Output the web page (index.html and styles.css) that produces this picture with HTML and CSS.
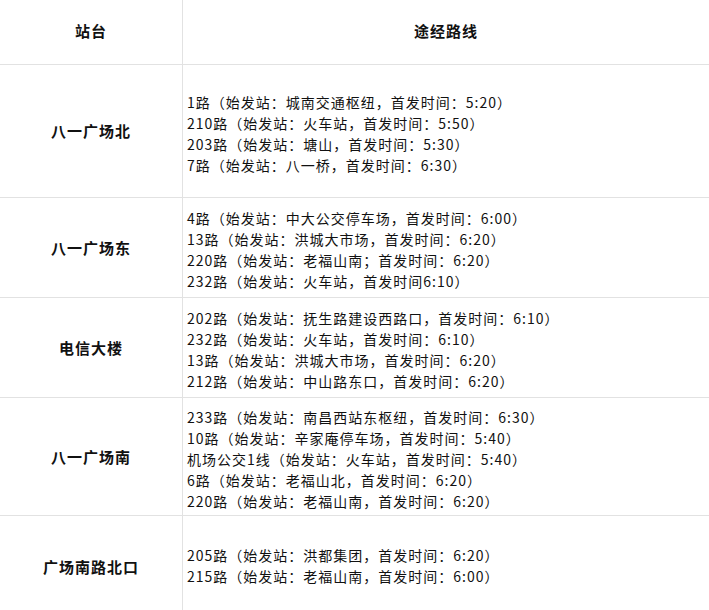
FILE: index.html
```html
<!DOCTYPE html>
<html lang="zh-CN">
<head>
<meta charset="utf-8">
<link rel="stylesheet" href="styles.css">
</head>
<body>
<table class="bus-table">
  <thead>
    <tr class="row-head">
      <th class="col-station">站台</th>
      <th class="col-routes">途经路线</th>
    </tr>
  </thead>
  <tbody>
    <tr class="row-1">
      <td class="col-station">八一广场北</td>
      <td class="col-routes">
        <div>1路（始发站：城南交通枢纽，首发时间：5:20）</div>
        <div>210路（始发站：火车站，首发时间：5:50）</div>
        <div>203路（始发站：塘山，首发时间：5:30）</div>
        <div>7路（始发站：八一桥，首发时间：6:30）</div>
      </td>
    </tr>
    <tr class="row-2">
      <td class="col-station">八一广场东</td>
      <td class="col-routes">
        <div>4路（始发站：中大公交停车场，首发时间：6:00）</div>
        <div>13路（始发站：洪城大市场，首发时间：6:20）</div>
        <div>220路（始发站：老福山南；首发时间：6:20）</div>
        <div>232路（始发站：火车站，首发时间6:10）</div>
      </td>
    </tr>
    <tr class="row-3">
      <td class="col-station">电信大楼</td>
      <td class="col-routes">
        <div>202路（始发站：抚生路建设西路口，首发时间：6:10）</div>
        <div>232路（始发站：火车站，首发时间：6:10）</div>
        <div>13路（始发站：洪城大市场，首发时间：6:20）</div>
        <div>212路（始发站：中山路东口，首发时间：6:20）</div>
      </td>
    </tr>
    <tr class="row-4">
      <td class="col-station">八一广场南</td>
      <td class="col-routes">
        <div>233路（始发站：南昌西站东枢纽，首发时间：6:30）</div>
        <div>10路（始发站：辛家庵停车场，首发时间：5:40）</div>
        <div>机场公交1线（始发站：火车站，首发时间：5:40）</div>
        <div>6路（始发站：老福山北，首发时间：6:20）</div>
        <div>220路（始发站：老福山南，首发时间：6:20）</div>
      </td>
    </tr>
    <tr class="row-5">
      <td class="col-station">广场南路北口</td>
      <td class="col-routes">
        <div>205路（始发站：洪都集团，首发时间：6:20）</div>
        <div>215路（始发站：老福山南，首发时间：6:00）</div>
      </td>
    </tr>
  </tbody>
</table>
</body>
</html>
```

FILE: styles.css
```css
html, body {
  margin: 0;
  padding: 0;
  background: #ffffff;
}

.bus-table {
  width: 709px;
  border-collapse: collapse;
  font-family: "Noto Sans CJK SC", "Noto Sans", sans-serif;
  color: #111111;
}

.bus-table th,
.bus-table td {
  border-bottom: 1px solid #e2e2e2;
  vertical-align: middle;
  padding: 0;
}

.bus-table .col-station {
  width: 182px;
  text-align: center;
  font-weight: bold;
  font-size: 15px;
  letter-spacing: 1px;
  border-right: 1px solid #e2e2e2;
}

.bus-table th {
  padding-bottom: 3px;
}

.bus-table th.col-routes {
  text-align: center;
  font-weight: bold;
  font-size: 15px;
  letter-spacing: 1px;
}

.bus-table td.col-routes {
  text-align: left;
  padding-left: 4px;
  font-size: 14px;
  line-height: 21px;
  letter-spacing: 1px;
  font-weight: normal;
}

.row-head { height: 64px; }
.row-1 { height: 133px; }
.row-2 { height: 100px; }
.row-3 { height: 100px; }
.row-4 { height: 118px; }
.row-5 { height: 102px; }

.row-1 td.col-routes,
.row-2 td.col-routes,
.row-3 td.col-routes,
.row-4 td.col-routes { padding-top: 6px; }
```
